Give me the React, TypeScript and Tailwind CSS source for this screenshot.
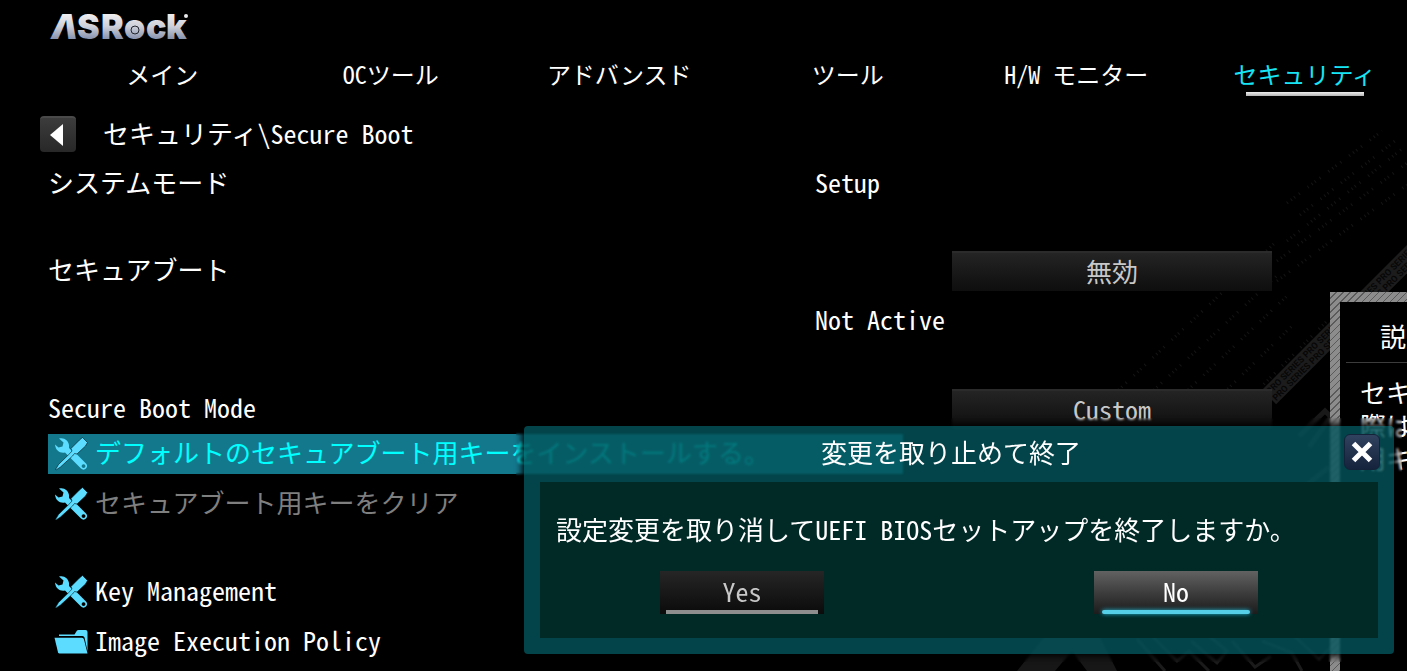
import { Fragment } from "react";

const tabs = [
  "メイン",
  "OCツール",
  "アドバンスド",
  "ツール",
  "H/W モニター",
  "セキュリティ",
];

const seriesLine = "PRO SERIES ".repeat(4).trim();

function Logo() {
  return (
    <svg
      width="144"
      height="30"
      viewBox="0 0 144 30"
      role="img"
      aria-label="ASRock"
      fill="url(#chrome)"
      className="block overflow-visible font-['Inter',sans-serif] text-[34px] font-black"
    >
      <defs>
        <linearGradient
          id="chrome"
          gradientUnits="userSpaceOnUse"
          x1="0"
          y1="2"
          x2="0"
          y2="27"
        >
          <stop offset="0" stopColor="#f0eef0" />
          <stop offset="0.5" stopColor="#cdd0da" />
          <stop offset="1" stopColor="#8792ad" />
        </linearGradient>
      </defs>
      <text y="27">
        <tspan x="3" fontStyle="italic">
          Λ
        </tspan>
        <tspan x="29">S</tspan>
        <tspan x="53">R</tspan>
        <tspan x="76">o</tspan>
        <tspan x="98">c</tspan>
        <tspan x="118">k</tspan>
      </text>
      <circle cx="87" cy="18" r="6" stroke="none" />
      <circle cx="87" cy="18" r="4" fill="none" stroke="#22252c" />
      <circle cx="138" cy="4" r="2" />
    </svg>
  );
}

function ToolsIcon() {
  return (
    <svg
      width="34"
      height="34"
      viewBox="0 0 34 34"
      fill="#5cdcff"
      className="shrink-0"
      aria-hidden="true"
    >
      <path d="M5 1.500C10 0 14.500 3.500 15 8V11L19 15L14.500 19L11 15.500C6 16.500 1.500 13.500 1 7.500L4.500 10.500L8.500 9.500L9.500 5.500Z" />
      <path
        fillRule="evenodd"
        d="M21 15.500L32 26.500C33.500 28 33.500 30 32 31.500C30.500 33 28.500 33 27 31.500L15.500 20ZM29.500 27.200a1.900 1.900 0 1 0 .1 0Z"
      />
      <path
        stroke="#04161c"
        strokeWidth="0.600"
        d="M28.500 .5L33.500 5.500L31.500 9L23 17L20.500 16.500L18.500 19L6.500 30L2 33L1.500 32.500L4.500 27.500L15.800 16.500L18 14L17 11.500L25.500 3Z"
      />
    </svg>
  );
}

function FolderIcon() {
  return (
    <svg
      width="34"
      height="26"
      viewBox="0 0 34 26"
      fill="#5cdcff"
      className="shrink-0"
      aria-hidden="true"
    >
      <path d="M5 7V5.500H20.500L23 1.500Q23.500 1 24.500 1H31.500Q33.500 1 33.500 3V22L30.500 8.500Q30 7 28.500 7Z" />
      <path d="M0.500 8.800H28Q29.500 8.800 30 10.500L33.500 24.500H5.500Q4.500 24.500 4 23.200Z" />
    </svg>
  );
}

function Backdrop() {
  return (
    <svg
      width="460"
      height="560"
      viewBox="0 0 460 560"
      className="pointer-events-none absolute top-[111px] right-0"
      aria-hidden="true"
    >
      <g
        fill="none"
        stroke="#151515"
        strokeWidth="3"
        strokeDasharray="1 4 1 3 1 5 1 10"
      >
        <path d="M340 92L435 20M353 104L448 30M340 130L460 34M330 150L460 52M330 170L460 74" />
        <path d="M130 318L330 130M165 318L335 160M200 318L340 185M240 318L350 210M280 310L380 210" />
      </g>
      <g transform="translate(315 279) rotate(-45)">
        <rect width="260" height="20" fill="#1c1c1c" />
        <g
          fill="#070707"
          className="font-['Roboto',sans-serif] text-[9px] font-bold"
        >
          <text x="2" y="9">
            {seriesLine}
          </text>
          <text x="2" y="18">
            {seriesLine}
          </text>
        </g>
      </g>
      <g fill="none" stroke="#191919" strokeWidth="5">
        <path d="M352 325L378 300L384 306L362 336M392 345L412 306M290 395L310 375L320 382L305 400M325 420L362 372L382 356M440 440L460 415M445 530L460 515" />
      </g>
      <path
        d="M70 560L110 510H145L170 560H140L125 540L108 560Z"
        fill="#171717"
      />
      <g fill="none" stroke="#1b1b1b" strokeWidth="3">
        <path d="M190 528L218 560M205 525L230 550L242 540L262 560M244 530L270 552L280 540L262 525M285 530L308 556L324 545M315 530L345 542L355 560M342 520L372 548L385 535" />
      </g>
    </svg>
  );
}

const rowClass = "grid h-10 grid-cols-[767fr_515fr] items-center";

const selectClass =
  "ml-auto mr-[58px] h-10 w-80 appearance-none border-t-2 border-[#2b2b2b] bg-linear-to-b from-[#242424] to-[#0e0e0e] pb-1.5 text-center text-[#c8c8c8] [text-align-last:center]";

function Options() {
  return (
    <section className="min-w-0 flex-1 pt-3 pl-12">
      <div className={rowClass}>
        <span className="pb-1">システムモード</span>
        <span className="pb-1">Setup</span>
      </div>
      <div className={`mt-[47px] ${rowClass}`}>
        <label htmlFor="secure-boot" className="pb-1">
          セキュアブート
        </label>
        <select id="secure-boot" className={selectClass}>
          <option>無効</option>
        </select>
      </div>
      <div className={`mt-2.5 ${rowClass}`}>
        <span className="col-start-2 pb-1">Not Active</span>
      </div>
      <div className={`mt-12 ${rowClass}`}>
        <label htmlFor="boot-mode" className="pb-1">
          Secure Boot Mode
        </label>
        <select id="boot-mode" className={selectClass}>
          <option>Custom</option>
        </select>
      </div>
      <button className="mt-[5px] flex h-10 w-2/3 items-center gap-[7px] bg-[#14788c] px-1.5 whitespace-nowrap text-[#00ffff]">
        <ToolsIcon />
        <span className="pb-1">
          デフォルトのセキュアブート用キーをインストールする。
        </span>
      </button>
      <button className="mt-2.5 flex h-10 items-center gap-[7px] px-1.5 text-[#7f7f7f]">
        <ToolsIcon />
        <span className="pb-1">セキュアブート用キーをクリア</span>
      </button>
      <button className="mt-12 flex h-10 items-center gap-[7px] px-1.5">
        <ToolsIcon />
        <span className="pb-1">Key Management</span>
      </button>
      <button className="mt-2.5 flex h-10 items-center gap-[7px] px-1.5">
        <FolderIcon />
        <span className="pb-1">Image Execution Policy</span>
      </button>
    </section>
  );
}

function HelpPanel() {
  return (
    <aside className="mt-[140px] flex w-[77px] shrink-0 bg-[repeating-linear-gradient(135deg,#8c8c8c_0,#8c8c8c_4px,#5a5a5a_4px,#5a5a5a_5px)] pt-2.5 pl-2.5">
      <div className="flex-1 overflow-hidden bg-black whitespace-nowrap">
        <h2 className="ml-1.5 h-[61px] border-b border-[#3c3c3c] pt-4 pl-[34px]">
          説
        </h2>
        <p className="pt-3 pl-5 leading-[33px]">
          {["セキ", "際は", "用キ"].map((line) => (
            <Fragment key={line}>
              {line}
              <br />
            </Fragment>
          ))}
        </p>
      </div>
    </aside>
  );
}

function ExitDialog() {
  return (
    <div className="absolute top-[418px] right-[5px] w-[886px] p-2 backdrop-blur-[1px]">
      <div
        role="dialog"
        aria-labelledby="exit-title"
        className="rounded-[4px] bg-[#02555b]/80 px-4 pb-4 shadow-[0_0_7px_2px_#000]"
      >
        <header className="flex h-14 items-center pb-1 pl-[18px]">
          <h2 id="exit-title" className="flex-1 text-center">
            変更を取り止めて終了
          </h2>
          <button
            aria-label="Close"
            className="-mr-0.5 flex size-9 items-center justify-center rounded-md border border-[#14233a] bg-linear-to-b from-[#30425f] to-[#16233c]"
          >
            <svg
              width="22"
              height="22"
              viewBox="0 0 22 22"
              stroke="#fff"
              strokeWidth="5"
            >
              <path d="M2.500 2.500L19.500 19.500M19.500 2.500L2.500 19.500" />
            </svg>
          </button>
        </header>
        <div className="bg-[#012926] px-4 pt-[31px] pb-6">
          <p className="leading-8">
            設定変更を取り消してUEFI BIOSセットアップを終了しますか。
          </p>
          <div className="mt-[26px] flex justify-between px-26">
            <button className="h-[43px] w-41 bg-linear-to-b from-[#262626] to-[#0b0b0b] px-1.5 text-[#c8c8c8]">
              <span className="flex h-[43px] items-center justify-center border-b-4 border-[#8e8e8e]">
                Yes
              </span>
            </button>
            <button className="h-[43px] w-41 bg-linear-to-b from-[#626262] to-[#1c1c1c] px-2">
              <span className="relative flex h-[43px] items-center justify-center pb-1">
                No
                <i className="absolute inset-x-0 bottom-0 h-1 rounded-full bg-[#55cfe8] shadow-[0_0_4px_#22b8d8]" />
              </span>
            </button>
          </div>
        </div>
      </div>
    </div>
  );
}

export default function App() {
  return (
    <div className="relative flex h-screen flex-col overflow-hidden bg-black font-['Noto_Sans_CJK_JP',sans-serif] text-[26px] leading-9 text-white [font-feature-settings:'hwid']">
      <Backdrop />
      <header className="relative pt-3">
        <div className="pl-12">
          <Logo />
        </div>
        <nav className="mt-3.5 -mr-3 grid grid-cols-6 pl-12 text-2xl">
          {tabs.map((tab, index) => (
            <a
              key={tab}
              href="#"
              className={
                index === 5
                  ? "relative flex h-10 items-center justify-center pb-1 text-[#17e4f4]"
                  : "flex h-10 items-center justify-center pb-1"
              }
            >
              {tab}
              {index === 5 && (
                <span className="absolute bottom-0 h-1 w-[118px] bg-linear-to-b from-[#eeeeee] to-[#b4b4b4]" />
              )}
            </a>
          ))}
        </nav>
        <div className="mt-5 flex items-center gap-[27px] pl-10">
          <button
            aria-label="Back"
            className="flex size-9 items-center justify-center rounded-[4px] border-t-2 border-[#4a4a4a] bg-linear-to-b from-[#3c3c3c] to-[#282828]"
          >
            <svg width="16" height="24" viewBox="0 0 16 24" fill="#fff">
              <path d="M0 12L13 1V23Z" />
            </svg>
          </button>
          <h1 className="-mt-0.5">セキュリティ\Secure Boot</h1>
        </div>
      </header>
      <main className="relative flex min-h-0 flex-1">
        <Options />
        <HelpPanel />
      </main>
      <ExitDialog />
    </div>
  );
}
